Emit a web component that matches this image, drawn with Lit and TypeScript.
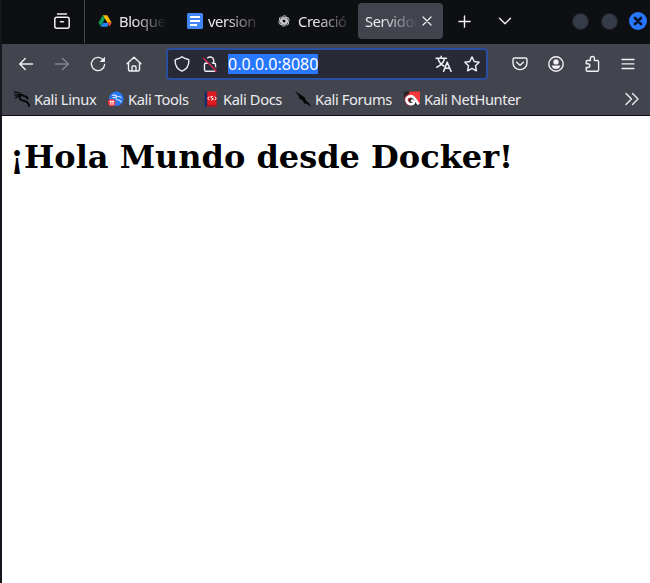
import { LitElement, html, css, svg, nothing, TemplateResult, SVGTemplateResult } from "lit";
import { customElement, property } from "lit/decorators.js";

const glyphs: Record<string, SVGTemplateResult> = {
  archive: svg`<g class="line"><path d="M3.500 1h9"/><rect x=".8" y="4.300" width="14.400" height="10.900" rx="2"/><path d="M6.500 8.800h3"/></g>`,
  drive: svg`<path fill="#ffba00" d="M5.400 1.400h5.200L15.600 10h-5z"/><path fill="#0a9d58" d="M5.400 1.400 8 5.800 3.200 14.300.5 10z"/><path fill="#2684fc" d="M5.700 10h7l-2 4.500H3.200z"/><path fill="#ea4335" d="M10.600 10h5l-2.300 4.500z"/><path fill="#0e0f13" d="m8 5.800 2.500 4.300h-5z"/>`,
  docs: svg`<rect width="16" height="16" rx="1.5" fill="#4285f4"/><path stroke="#fff" stroke-width="2" d="M3 4h10M3 8h10M3 12h7"/>`,
  knot: svg`<g class="line" stroke-width="1.2">${[0, 60, 120, 180, 240, 300].map(a => svg`<path transform="rotate(${a} 8 8)" d="M5.400 9.500V4.200a3.200 3.200 0 0 1 5.600-2.100M5.400 6 9 3.500l3.600 2"/>`)}</g>`,
  close: svg`<path class="line" stroke-width="1.2" d="m4 4 8 8m0-8-8 8"/>`,
  plus: svg`<path class="line" d="M8 2v12M2 8h12"/>`,
  down: svg`<path class="line" stroke-width="1.4" d="m2.500 5.300 5.500 5.500 5.500-5.500"/>`,
  back: svg`<path class="line" stroke-width="1.4" d="M14.500 8H1.800M7.300 2.400 1.700 8l5.600 5.600"/>`,
  forward: svg`<path class="line" stroke-width="1.4" d="M1.500 8h12.700M8.700 2.400 14.300 8l-5.600 5.600"/>`,
  reload: svg`<path class="line" stroke-width="1.4" d="M13.500 4.300A6.600 6.600 0 1 0 14.600 8.500"/><path class="solid" d="M15 .7v5.400H9.600z"/>`,
  home: svg`<path class="line" stroke-width="1.4" d="M1 7.700 8 1.200l7 6.500M2.500 6.500v7q0 1.500 1.500 1.500h8q1.500 0 1.500-1.500v-7M6 15v-3.500q0-1.500 1-1.500h2q1 0 1 1.500V15"/>`,
  shield: svg`<path class="line" stroke-width="1.4" d="M8 .8q2.700 2 5.700 2.400 1.200.2 1.200 1.400 0 8-6.900 10.600Q1.100 12.600 1.100 4.600q0-1.200 1.200-1.400 3-.4 5.700-2.400z"/>`,
  lock: svg`<path class="line" stroke-width="1.4" d="M4.500 6.500V4.600a3.600 3.600 0 0 1 7.200 0v2M3.700 7.200h8.600q1.200 0 1.200 1.200v5.400q0 1.400-1.200 1.400H3.700q-1.200 0-1.200-1.400V8.400q0-1.200 1.200-1.200z"/><path stroke="#282a36" stroke-width="3" d="m2.500 1.500 12 13"/><path stroke="#e22850" stroke-width="1.400" d="m1.200 2 13.300 13.300"/>`,
  translate: svg`<path class="line" stroke-width="1.5" d="M0 2.200h10.500M5.200.2v2M2 2.500q1.500 5.500 6 7.500M8.600 2.500Q7 8.500.7 11.200"/><path class="line" stroke-width="1.600" d="m7.600 15.200 3.600-9 3.800 9M9 12.200h4.600"/>`,
  star: svg`<path class="line" stroke-width="1.400" d="m8 .9 2.200 4.600 5 .7-3.700 3.500.9 5.100L8 12.400l-4.400 2.400.9-5.100L.8 6.200l5-.7z"/>`,
  pocket: svg`<path class="line" stroke-width="1.400" d="M2.500 2h11Q15 2 15 3.500V7a7 6.600 0 0 1-14 0V3.500Q1 2 2.500 2zM4.600 6.200 8 9.200l3.400-3"/>`,
  user: svg`<circle class="line" cx="8" cy="8" r="7.200" stroke-width="1.400"/><circle class="solid" cx="8" cy="5.900" r="2.700"/><path class="solid" d="M3.700 9.600h8.600q-.7 3.500-4.300 3.500T3.700 9.600z"/>`,
  puzzle: svg`<path class="line" stroke-width="1.400" d="M2.200 5.700q0-1.200 1.200-1.200h3V2.500a2 2 0 0 1 4 0v2h3q1.200 0 1.200 1.200v8.100q0 1.500-1.200 1.500h-10q-1.200 0-1.200-1.500v-2.300h1.700a1.900 1.900 0 0 0 0-3.800H2.200z"/>`,
  menu: svg`<path class="line" stroke-width="1.300" d="M2 3.500h12M2 7.900h12M2 12.500h12"/>`,
  more: svg`<path class="line" stroke-width="1.400" d="m2 2.500 5.500 5.500L2 13.500m6.500-11L14 8l-5.500 5.500"/>`,
  dragon: svg`<path class="ink" d="M0 1.200q4-.5 6.500 1.600M.3 4.200q3-1 6.200.2M1 7q3-2 6-2"/><path class="ink heavy" d="M5 3.300q3.500.4 5.700 2 2.500 0 3 3M7 4.200q-3.500 4.600 2.600 5.600 4.800.5 5.600 5.800"/>`,
  tools: svg`<circle cx="8.300" cy="7.800" r="7.300" fill="#2878f5"/><path fill="none" stroke="#d9e8ff" stroke-width="1.100" d="M4 4.500q3-1 5 .8 3.500 0 4.500 1.500M4.500 6.800q2-.8 3.500-.5M8.500 5.800q-1.500 2.700 2 3.200 2.500.6 2.700 2.500"/><circle cx="3.700" cy="11.800" r="3.800" fill="#f0323c"/><path stroke="#fff" stroke-width="1.100" d="M1.700 10.200h4.500M2.800 10v4M5 10v4"/>`,
  book: svg`<path fill="#e01b1f" d="M4 .5h9.500v15H4z"/><path fill="#1c2c68" d="M1.500.5h2.700v15H1.500z"/><path fill="#a11522" d="M4 13.800h9.500v1.700H4z"/><path fill="none" stroke="#fff" stroke-width="1" d="M6.200 5.500 4.800 7.300l1.400 1.800m5.600-3.600 1.400 1.800-1.400 1.800M9.800 5.300 7.600 6l2.800 2.200-2.200 1"/>`,
  slash: svg`<path fill="#050608" d="m0 0 5 3.200 4.500 3 2 4 2.300 1.500 2.500 4.200-4.800-3.200-2.200-.3-1.800-3.200-3-1.200L3.700 5z"/>`,
  net: svg`<path fill="#25262b" d="M0 .5h6L4 5 0 8z"/><path fill="#f5363b" d="M6 .5h10v13.300L10 5 4 4z"/><path fill="#c9202c" d="M.7 7.500q0-3 3-4L6 7l1 7-3 .5Q.7 12 .7 7.500z"/><path fill="#25262b" d="M5 8h6l3 4v2H6z"/><path fill="none" stroke="#fff" stroke-width="2.600" d="M2.300 7.500q3.500-4 7.200-1.200 3 3 5 7.200M2.500 7.500q-.5 4.500 4 5.800 3.800 0 3.500-2.300L7.200 9.200"/>`,
  x: svg`<path fill="none" stroke="#0a1020" stroke-width="2.600" stroke-linecap="round" d="m5 5 6 6m0-6-6 6"/>`,
};

@customElement("ui-glyph")
class UiGlyph extends LitElement {
  @property() name = "";
  static styles = css`
    :host { display: block; flex: none; width: 16px; height: 16px; color: #f0f0f4; }
    svg { display: block; width: 100%; height: 100%; overflow: visible; }
    .line { fill: none; stroke: currentColor; stroke-linecap: round; stroke-linejoin: round; }
    .line:not([stroke-width]) { stroke-width: 1.5; }
    .solid { fill: currentColor; }
    .ink { fill: none; stroke: #08090c; stroke-width: 1.4; }
    .heavy { stroke-width: 2; }
  `;
  render() {
    return html`<svg viewBox="0 0 16 16" aria-hidden="true">${glyphs[this.name] ?? nothing}</svg>`;
  }
}

const icon = (name: string, cls = ""): TemplateResult => html`<ui-glyph class=${cls} name=${name}></ui-glyph>`;

@customElement("app-root")
class AppRoot extends LitElement {
  static styles = css`
    :host { display: block; box-sizing: border-box; height: 583px; overflow: hidden; background: #fff;
      border-left: 2px solid #16171d; font: 14.67px "Noto Sans", sans-serif; letter-spacing: -0.37px; color: #ebebef; }
    .tabs { display: flex; height: 44px; background: #0e0f13; }
    .pinned { flex: none; width: 83px; height: 43px; padding: 13px 0 0 52px; box-sizing: border-box; border-right: 1px solid #47484f; }
    .tab { display: flex; flex: none; align-items: center; width: 90px; height: 42px; padding-left: 13px; box-sizing: border-box; gap: 5px; }
    .drive { width: 89px; padding-left: 12px; gap: 6px; }
    .label { flex: 1; min-width: 0; overflow: hidden; white-space: nowrap; }
    .fade { -webkit-mask-image: linear-gradient(90deg, #000 30%, transparent 98%); }
    .bloque { width: 48px; flex: none; }
    .small { width: 14px; height: 14px; margin: 0 1px; }
    .knot { width: 12px; height: 12px; margin: 0 3px 0 1px; color: #d4d5d9; }
    .tab.active { width: 85px; height: 36px; margin: 3px 0 0 4px; padding: 0 8px 0 7px; border-radius: 4px; background: #42444d; gap: 0; }
    .controls { display: flex; flex: none; align-items: center; height: 42px; }
    .plus { width: 15px; height: 15px; margin-left: 14px; }
    .down { margin-left: 24.5px; }
    .dots { display: flex; align-items: center; gap: 12px; margin-left: 59px; }
    .dot { width: 15px; height: 15px; border: 1px solid #20232b; border-radius: 50%; background: #363b48; }
    .dot.exit { width: 18px; height: 18px; margin-left: -1px; border: 0; background: #2777ff; display: grid; place-items: center; }
    .bar { display: flex; align-items: center; height: 40px; background: #43454e; }
    .nav { display: flex; gap: 20px; padding-left: 16px; width: 164px; box-sizing: border-box; }
    .dim { color: #85868d; }
    .address { display: flex; align-items: center; box-sizing: border-box; width: 322px; height: 32px; border: 2px solid #294f9e; border-radius: 4px; background: #282a36; padding: 0 6px; }
    .address > .lock { margin: 0 10px 0 12px; }
    .selected { background: #2777ff; font-size: 16px; letter-spacing: 0; line-height: 20px; color: #fff; }
    .translate { margin-left: auto; margin-right: 12px; }
    .actions { display: flex; gap: 20px; margin-left: 24px; }
    .bookmarks { display: flex; align-items: center; height: 31px; box-sizing: border-box; padding: 0 10px 1px 12px; background: #43454e; }
    .bookmark { display: flex; align-items: center; gap: 4px; box-sizing: border-box; white-space: nowrap; }
    .more { margin-left: auto; }
    .page { border-top: 1px solid #12051c; color: #000; padding: 0 8px; font-family: "DejaVu Serif", serif; font-size: 16px; letter-spacing: 0; }
    .title { font-size: 32px; margin: 22px 0; font-weight: bold; line-height: 38px; white-space: nowrap; }
    .w0 { width: 94px } .w1 { width: 95px } .w2 { width: 92px } .w3 { width: 109px }
  `;
  render() {
    const marks = [["dragon", "Kali Linux"], ["tools", "Kali Tools"], ["book", "Kali Docs"], ["slash", "Kali Forums"], ["net", "Kali NetHunter"]];
    return html`
      <div class="tabs">
        <div class="pinned">${icon("archive")}</div>
        <div class="tab drive">${icon("drive", "small")}<span class="label fade bloque">Bloque</span></div>
        <div class="tab">${icon("docs")}<span class="label fade">version</span></div>
        <div class="tab">${icon("knot", "knot")}<span class="label fade">Creació</span></div>
        <div class="tab active"><span class="label fade">Servidor</span>${icon("close")}</div>
        <div class="controls">${icon("plus", "plus")}${icon("down", "down")}
          <div class="dots"><span class="dot"></span><span class="dot"></span><span class="dot exit">${icon("x")}</span></div>
        </div>
      </div>
      <div class="bar">
        <div class="nav">${icon("back")}${icon("forward", "dim")}${icon("reload")}${icon("home")}</div>
        <div class="address">${icon("shield")}${icon("lock", "lock")}<span class="selected">0.0.0.0:8080</span>${icon("translate", "translate")}${icon("star")}</div>
        <div class="actions">${icon("pocket")}${icon("user")}${icon("puzzle")}${icon("menu")}</div>
      </div>
      <div class="bookmarks">
        ${marks.map(([g, t], i) => html`<div class="bookmark w${i}">${icon(g)}<span>${t}</span></div>`)}
        ${icon("more", "more")}
      </div>
      <main class="page"><h1 class="title">¡Hola Mundo desde Docker!</h1></main>`;
  }
}
